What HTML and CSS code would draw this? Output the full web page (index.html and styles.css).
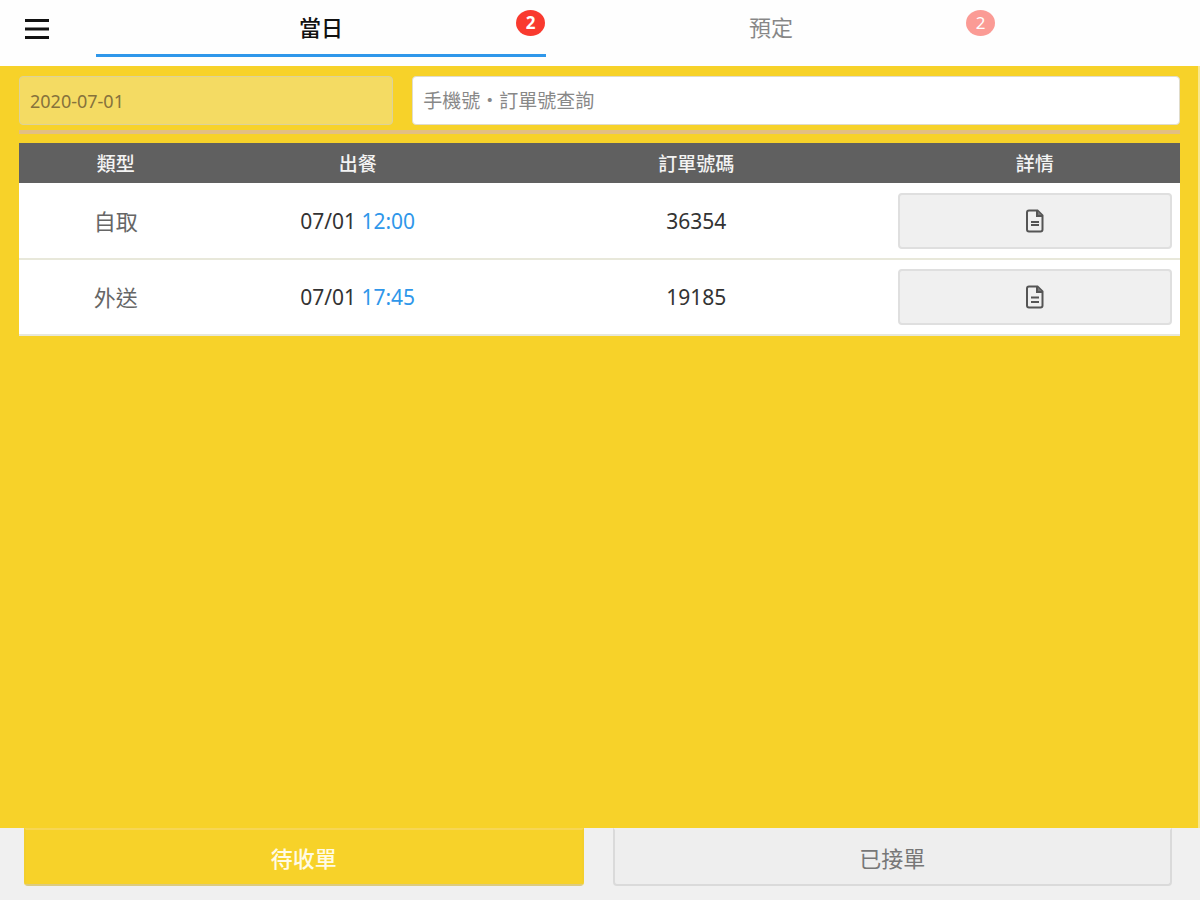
FILE: index.html
```
<!DOCTYPE html>
<html lang="zh-Hant">
<head>
  <meta charset="UTF-8">
  <meta name="viewport" content="width=device-width, initial-scale=1.0">
  <title>訂單</title>
  <link rel="stylesheet" href="styles.css">
</head>
<body>
  <header class="header">
    <button class="menu" type="button" aria-label="選單">
      <svg width="24" height="20" viewBox="0 0 24 20">
        <path d="M0 1.500h24M0 10h24M0 18.500h24" stroke="#111" stroke-width="3"/>
      </svg>
    </button>
    <nav class="tabs">
      <a class="tab active" href="#today">當日<span class="badge">2</span></a>
      <a class="tab" href="#reserve">預定<span class="badge">2</span></a>
    </nav>
  </header>

  <main class="main">
    <form class="search">
      <input class="field date" type="text" value="2020-07-01" aria-label="日期" readonly>
      <input class="field" type="text" placeholder="手機號・訂單號查詢" aria-label="手機號・訂單號查詢">
    </form>

    <table class="orders">
      <thead>
        <tr>
          <th>類型</th>
          <th class="col-time">出餐</th>
          <th class="col-number">訂單號碼</th>
          <th class="col-detail">詳情</th>
        </tr>
      </thead>
      <tbody>
        <tr>
          <td class="type">自取</td>
          <td>07/01 <span class="time">12:00</span></td>
          <td>36354</td>
          <td class="detail">
            <button class="detail-btn" type="button" aria-label="詳情">
              <svg width="18" height="24" viewBox="0 0 18 24" fill="none" stroke="#555" stroke-width="2">
                <path d="M3 1.500h8.500l5 5v14q0 2-2 2H3q-2 0-2-2v-17q0-2 2-2z"/>
                <path d="M11 1.500v5.500h5.500" fill="#777"/>
                <path d="M5 13h8M5 16h8"/>
              </svg>
            </button>
          </td>
        </tr>
        <tr>
          <td class="type">外送</td>
          <td>07/01 <span class="time">17:45</span></td>
          <td>19185</td>
          <td class="detail">
            <button class="detail-btn" type="button" aria-label="詳情">
              <svg width="18" height="24" viewBox="0 0 18 24" fill="none" stroke="#555" stroke-width="2">
                <path d="M3 1.500h8.500l5 5v14q0 2-2 2H3q-2 0-2-2v-17q0-2 2-2z"/>
                <path d="M11 1.500v5.500h5.500" fill="#777"/>
                <path d="M5 12.500h8M5 17h8"/>
              </svg>
            </button>
          </td>
        </tr>
      </tbody>
    </table>
  </main>

  <footer class="footer">
    <button class="status active" type="button">待收單</button>
    <button class="status" type="button">已接單</button>
  </footer>
</body>
</html>
```
FILE: styles.css
```
* {
  margin: 0;
  padding: 0;
  box-sizing: border-box;
}

body {
  display: flex;
  flex-direction: column;
  min-height: 100vh;
  font-family: "Noto Sans", "Noto Sans CJK TC", sans-serif;
  font-size: 21px;
  color: #333;
  background: #f0f0f0;
}

button,
input {
  font-family: inherit;
}

button {
  cursor: pointer;
}

/* Header */
.header {
  display: flex;
  height: 66px;
  background: #fefefe;
}

.menu {
  width: 8%;
  height: 57px;
  padding-left: 25px;
  border: none;
  background: none;
}

.menu svg {
  display: block;
}

.tabs {
  display: flex;
  width: 75%;
  height: 57px;
}

.tab {
  position: relative;
  flex: 1;
  border-bottom: 3px solid transparent;
  font-size: 22px;
  line-height: 54px;
  text-align: center;
  text-decoration: none;
  color: #111;
  opacity: 0.5;
}

.tab.active {
  border-color: #2f97ea;
  font-weight: 500;
  opacity: 1;
}

.badge {
  position: absolute;
  top: 10px;
  right: 1px;
  width: 29px;
  height: 26px;
  border-radius: 50%;
  background: #f93a2f;
  color: #fff;
  font-size: 17px;
  line-height: 26px;
}

.tab.active .badge {
  font-weight: bold;
}

/* Search and list */
.main {
  flex: 1;
  padding: 10px 18px 0 19px;
  border-right: 2px solid #f9e88f;
  background: #f7d229;
}

.search {
  display: grid;
  grid-template-columns: calc((100% + 19px) / 3 - 19px) 1fr;
  gap: 19px;
  padding-bottom: 5px;
  border-bottom: 4px solid #e2bf83;
  margin-bottom: 9px;
}

.field {
  min-width: 0;
  height: 49px;
  padding: 0 10px;
  border: 1px solid #e0dccb;
  border-radius: 4px;
  background: #fff;
  font-size: 19px;
  color: #333;
}

.field::placeholder {
  color: #888;
}

.date {
  border-color: #dcd29a;
  background: #f4db63;
  font-size: 18px;
  color: #86723c;
}

.orders {
  width: 100%;
  table-layout: fixed;
  border-collapse: collapse;
  background: #fff;
  text-align: center;
}

.orders th {
  height: 40px;
  background: #606060;
  color: #f3f3f3;
  font-size: 19px;
  font-weight: 500;
}

.orders td {
  height: 76px;
  border-bottom: 2px solid #e8e8da;
  line-height: 30px;
}

.orders .type {
  font-size: 22px;
  color: #666;
}

.col-time,
.col-detail {
  width: 25%;
}

.col-number {
  width: 33.333%;
}

.time {
  color: #2f97ea;
}

.orders .detail {
  padding: 0 8px;
}

.detail-btn {
  display: flex;
  align-items: center;
  justify-content: center;
  width: 100%;
  height: 56px;
  border: 2px solid #dfdfdf;
  border-radius: 4px;
  background: #f0f0f0;
}

/* Footer */
.footer {
  display: flex;
  gap: 29px;
  padding: 0 28px 14px 24px;
}

.status {
  flex: 1;
  height: 58px;
  border: 2px solid #dadada;
  border-top-color: #f0f0f0;
  border-radius: 0 0 4px 4px;
  background: #eee;
  font-size: 22px;
  color: #777;
}

.status.active {
  border-color: #f7d654 #f3cf2c #dccb80;
  background: #f7d229;
  color: #fffbe6;
  font-weight: 500;
}
```
